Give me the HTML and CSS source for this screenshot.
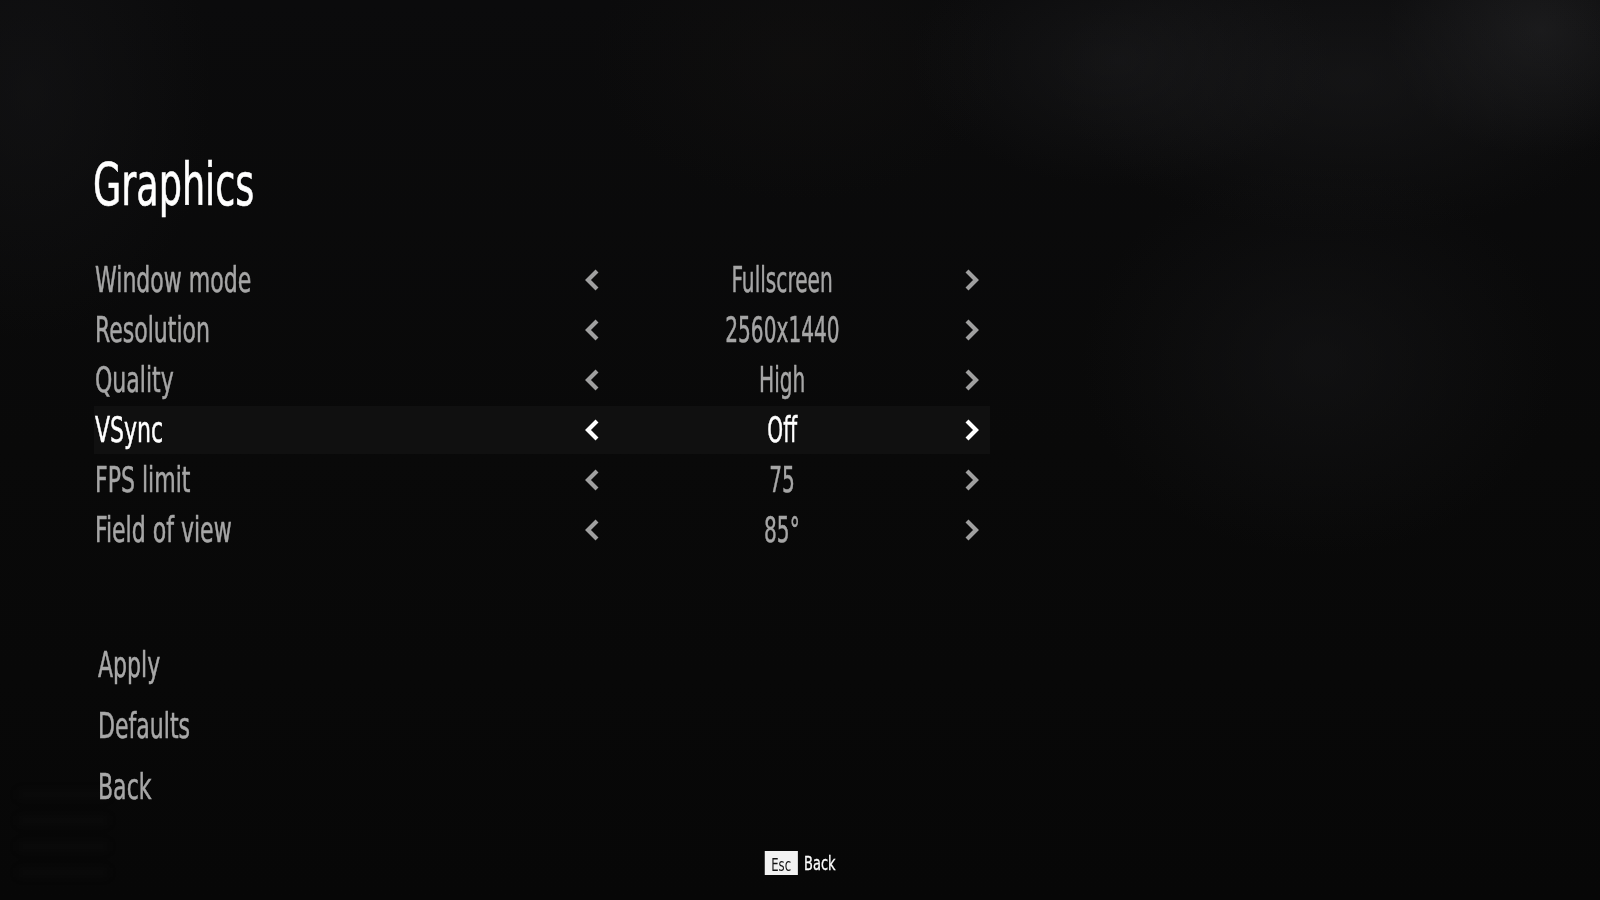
FILE: index.html
```html
<!DOCTYPE html>
<html lang="en">
<head>
<meta charset="utf-8">
<title>Graphics</title>
<link rel="stylesheet" href="styles.css">
</head>
<body>
<div class="screen">
  <div class="bg-glow"></div>
  <main class="menu">
    <h1 class="title"><span class="txt">Graphics</span></h1>
    <div class="options">
      <div class="row">
        <span class="label"><span class="txt">Window mode</span></span>
        <span class="arrow"><svg viewBox="0 0 16 24" width="16" height="24"><path d="M13 3 L4 12 L13 21" /></svg></span>
        <span class="value"><span class="txt">Fullscreen</span></span>
        <span class="arrow"><svg viewBox="0 0 16 24" width="16" height="24"><path d="M3 3 L12 12 L3 21" /></svg></span>
      </div>
      <div class="row">
        <span class="label"><span class="txt">Resolution</span></span>
        <span class="arrow"><svg viewBox="0 0 16 24" width="16" height="24"><path d="M13 3 L4 12 L13 21" /></svg></span>
        <span class="value"><span class="txt">2560x1440</span></span>
        <span class="arrow"><svg viewBox="0 0 16 24" width="16" height="24"><path d="M3 3 L12 12 L3 21" /></svg></span>
      </div>
      <div class="row">
        <span class="label"><span class="txt">Quality</span></span>
        <span class="arrow"><svg viewBox="0 0 16 24" width="16" height="24"><path d="M13 3 L4 12 L13 21" /></svg></span>
        <span class="value"><span class="txt">High</span></span>
        <span class="arrow"><svg viewBox="0 0 16 24" width="16" height="24"><path d="M3 3 L12 12 L3 21" /></svg></span>
      </div>
      <div class="row selected">
        <span class="label"><span class="txt">VSync</span></span>
        <span class="arrow"><svg viewBox="0 0 16 24" width="16" height="24"><path d="M13 3 L4 12 L13 21" /></svg></span>
        <span class="value"><span class="txt">Off</span></span>
        <span class="arrow"><svg viewBox="0 0 16 24" width="16" height="24"><path d="M3 3 L12 12 L3 21" /></svg></span>
      </div>
      <div class="row">
        <span class="label"><span class="txt">FPS limit</span></span>
        <span class="arrow"><svg viewBox="0 0 16 24" width="16" height="24"><path d="M13 3 L4 12 L13 21" /></svg></span>
        <span class="value"><span class="txt">75</span></span>
        <span class="arrow"><svg viewBox="0 0 16 24" width="16" height="24"><path d="M3 3 L12 12 L3 21" /></svg></span>
      </div>
      <div class="row">
        <span class="label"><span class="txt">Field of view</span></span>
        <span class="arrow"><svg viewBox="0 0 16 24" width="16" height="24"><path d="M13 3 L4 12 L13 21" /></svg></span>
        <span class="value"><span class="txt">85°</span></span>
        <span class="arrow"><svg viewBox="0 0 16 24" width="16" height="24"><path d="M3 3 L12 12 L3 21" /></svg></span>
      </div>
    </div>
    <div class="actions">
      <span class="action"><span class="txt">Apply</span></span>
      <span class="action"><span class="txt">Defaults</span></span>
      <span class="action"><span class="txt">Back</span></span>
    </div>
  </main>
  <footer class="hint">
    <div class="hint-inner">
      <span class="key">Esc</span>
      <span class="hint-text">Back</span>
    </div>
  </footer>
</div>
</body>
</html>
```
FILE: styles.css
```css
* { box-sizing: border-box; }
html, body {
  margin: 0;
  padding: 0;
  width: 1600px;
  height: 900px;
  overflow: hidden;
  background: #080808;
}
.screen {
  position: relative;
  width: 1600px;
  height: 900px;
  display: flex;
  flex-direction: column;
  font-family: "DejaVu Sans Condensed", "DejaVu Sans", sans-serif;
  font-stretch: condensed;
  background:
    radial-gradient(ellipse 300px 180px at 1120px 60px, rgba(34,34,36,0.4), rgba(34,34,36,0) 70%),
    radial-gradient(ellipse 420px 220px at 1350px 80px, rgba(34,34,36,0.4), rgba(34,34,36,0) 70%),
    radial-gradient(ellipse 220px 180px at 1540px 30px, rgba(44,44,46,0.45), rgba(44,44,46,0) 70%),
    radial-gradient(ellipse 340px 280px at 1320px 360px, rgba(24,24,26,0.5), rgba(24,24,26,0) 70%),
    radial-gradient(ellipse 260px 360px at 30px 90px, rgba(24,24,26,0.45), rgba(24,24,26,0) 70%),
    radial-gradient(ellipse 300px 200px at 800px 60px, rgba(22,20,18,0.35), rgba(22,20,18,0) 70%),
    linear-gradient(180deg, #0b0b0c 0%, #090909 50%, #070707 100%);
}
.bg-glow {
  position: absolute;
  left: 18px;
  top: 790px;
  width: 90px;
  height: 90px;
  background: repeating-linear-gradient(180deg, rgba(40,40,40,0.10) 0 9px, rgba(0,0,0,0) 9px 26px);
  filter: blur(4px);
}
.txt {
  display: inline-block;
  transform: scaleX(0.7);
  transform-origin: 0 50%;
  white-space: nowrap;
}
.menu {
  position: relative;
  padding-left: 94px;
  display: flex;
  flex-direction: column;
}
.title {
  margin: 153px 0 0 -1px;
  font-size: 58px;
  line-height: 64px;
  height: 64px;
  font-weight: normal;
  color: #ffffff;
  -webkit-text-stroke: 0.6px #ffffff;
}
.options {
  margin-top: 39px;
  display: flex;
  flex-direction: column;
  gap: 2px;
  width: 896px;
}
.row {
  display: grid;
  grid-template-columns: 480px 36px 1fr 36px;
  align-items: center;
  height: 48px;
  font-size: 35px;
  color: #a6a6a6;
  -webkit-text-stroke: 0.5px #a6a6a6;
}
.row.selected {
  background: #101010;
  color: #ffffff;
  -webkit-text-stroke: 0.5px #ffffff;
}
.label {
  padding-left: 1px;
  line-height: 48px;
}
.value {
  text-align: center;
  line-height: 48px;
}
.value .txt {
  transform: scaleX(0.64);
  transform-origin: 50% 50%;
}
.arrow {
  display: flex;
  justify-content: center;
  align-items: center;
}
.arrow svg path {
  fill: none;
  stroke: #a0a0a0;
  stroke-width: 4.2;
  stroke-linecap: butt;
  stroke-linejoin: miter;
}
.row.selected .arrow svg path {
  stroke: #ffffff;
}
.actions {
  margin-top: 81px;
  padding-left: 4px;
  display: flex;
  flex-direction: column;
}
.action {
  height: 61px;
  line-height: 61px;
  font-size: 35px;
  color: #a8a8a8;
  -webkit-text-stroke: 0.5px #a8a8a8;
}
.hint {
  margin-top: 33px;
  display: flex;
  justify-content: center;
}
.hint-inner {
  display: flex;
  align-items: center;
  gap: 9px;
  transform: scaleX(0.72);
  transform-origin: 50% 50%;
}
.key {
  background: #f2f2f2;
  color: #111111;
  font-size: 18px;
  line-height: 24px;
  height: 24px;
  padding: 2px 9px 0;
}
.hint-text {
  color: #ffffff;
  font-size: 20px;
  -webkit-text-stroke: 0.3px #ffffff;
}
```
